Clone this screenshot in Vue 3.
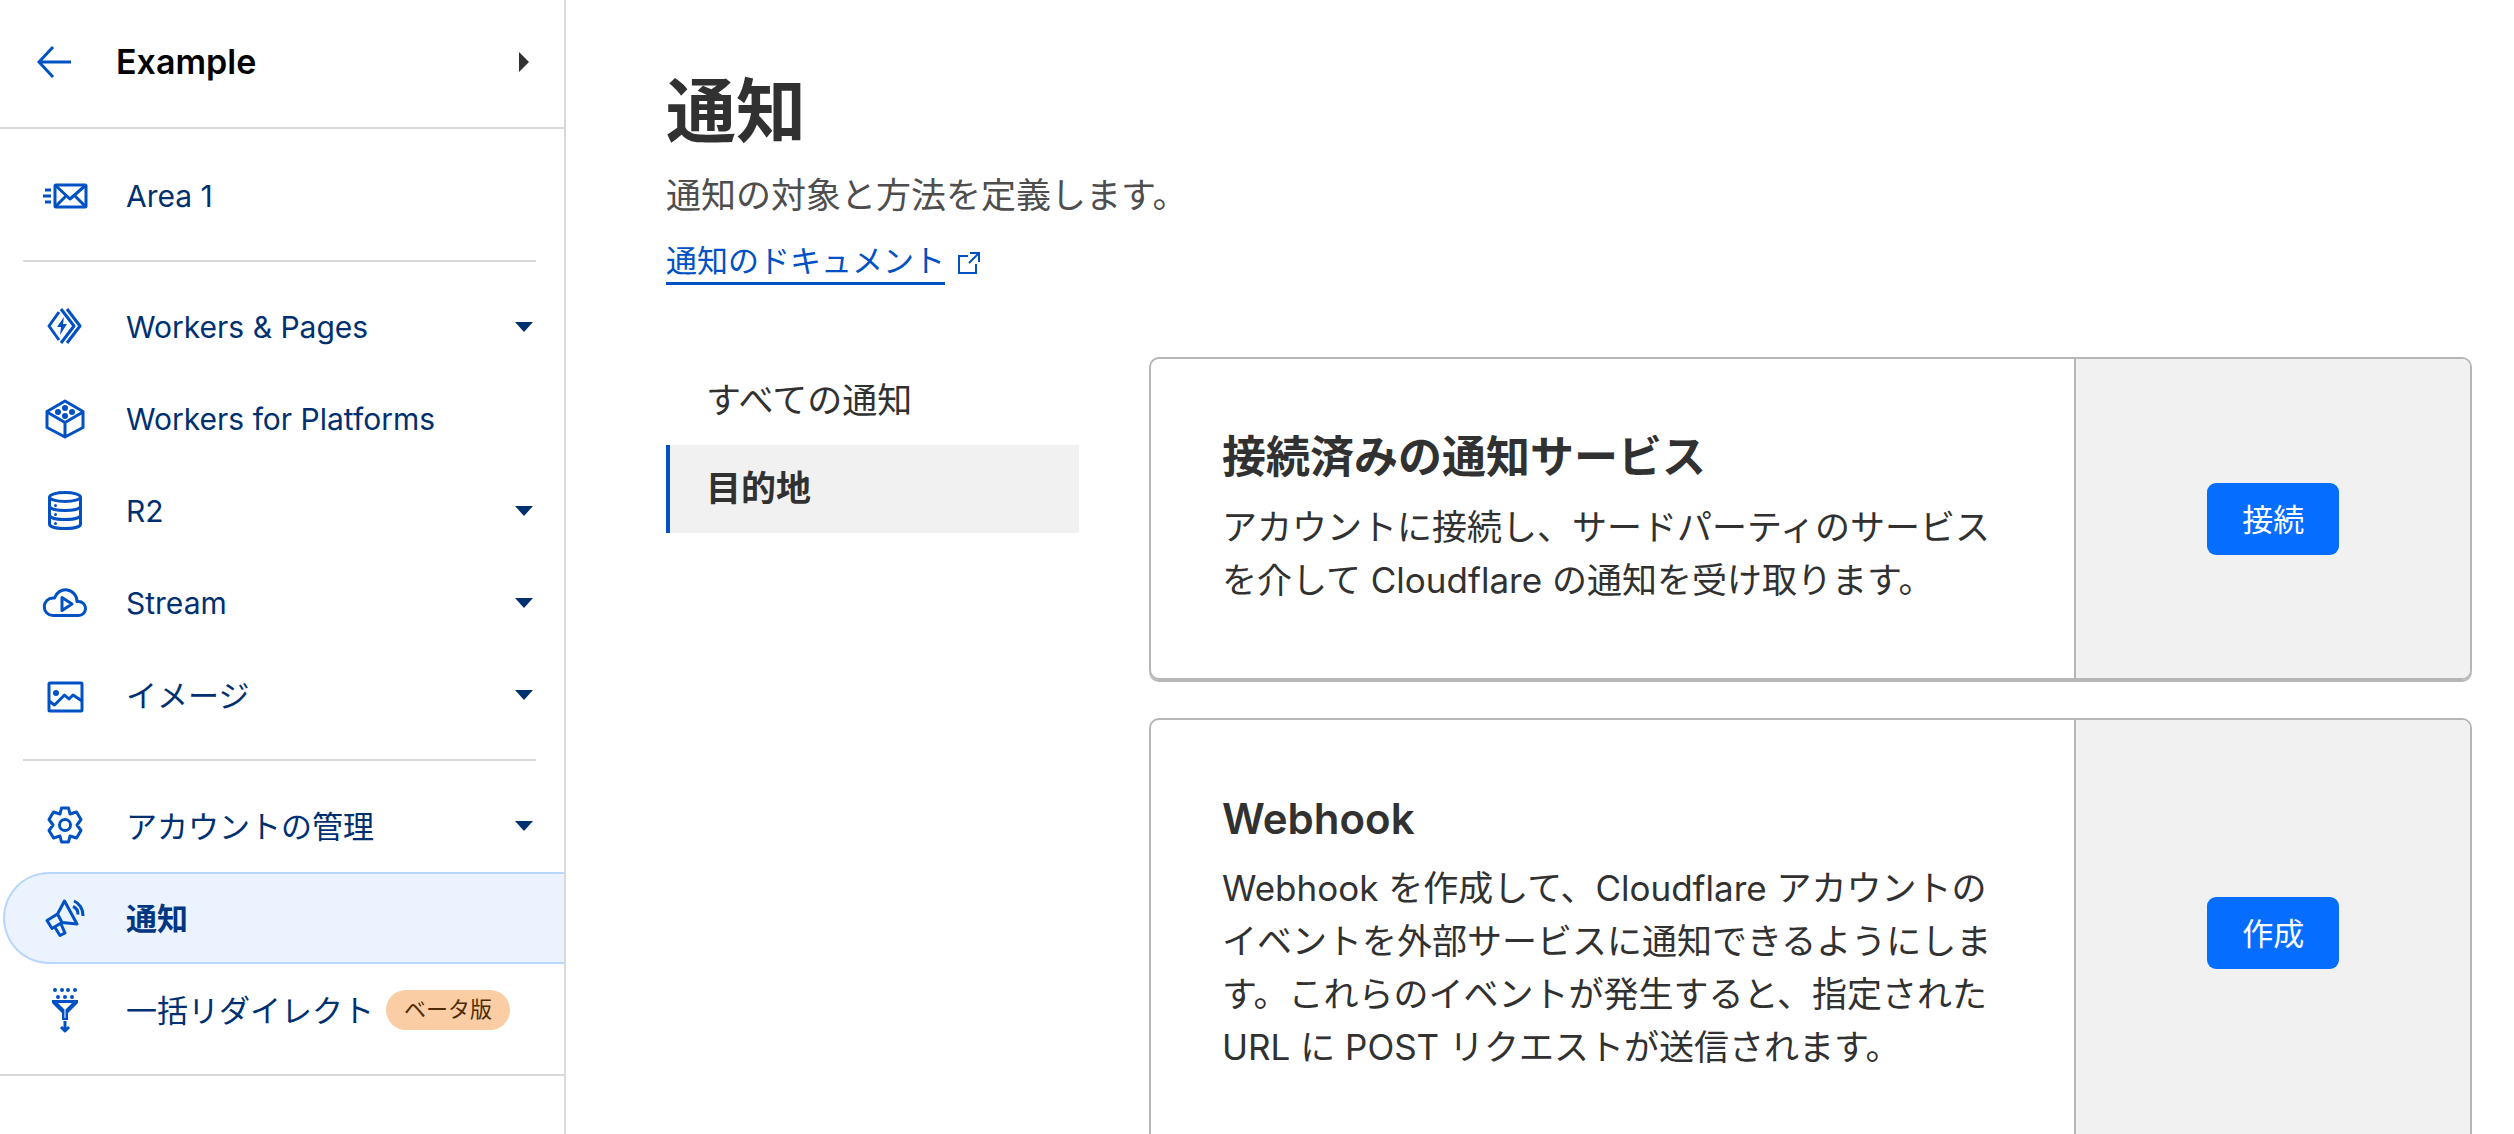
<script setup>
const navGroups = [
  [{ id: 'area', label: 'Area 1', lang: 'en' }],
  [
    { id: 'workers', label: 'Workers & Pages', lang: 'en', expandable: true },
    { id: 'platforms', label: 'Workers for Platforms', lang: 'en' },
    { id: 'r2', label: 'R2', lang: 'en', expandable: true },
    { id: 'stream', label: 'Stream', lang: 'en', expandable: true },
    { id: 'images', label: 'イメージ', expandable: true },
  ],
  [
    { id: 'account', label: 'アカウントの管理', expandable: true },
    { id: 'notifications', label: '通知', active: true },
    { id: 'redirects', label: '一括リダイレクト', badge: 'ベータ版' },
  ],
]

const tabs = [
  { label: 'すべての通知' },
  { label: '目的地', active: true },
]

const cards = [
  {
    title: '接続済みの通知サービス',
    text: 'アカウントに接続し、サードパーティのサービスを介して Cloudflare の通知を受け取ります。',
    action: '接続',
  },
  {
    title: 'Webhook',
    lang: 'en',
    text: 'Webhook を作成して、Cloudflare アカウントのイベントを外部サービスに通知できるようにします。これらのイベントが発生すると、指定された URL に POST リクエストが送信されます。',
    action: '作成',
  },
]
</script>

<template>
  <div class="app" lang="ja">
    <aside class="sidebar">
      <header class="account">
        <a class="back" href="#" aria-label="戻る">
          <svg width="34" height="32" viewBox="0 0 34 32" fill="none" stroke="currentColor" stroke-width="3">
            <path d="M34 16H2M16 1L2 16l14 15" />
          </svg>
        </a>
        <span class="account-name">Example</span>
        <button class="switch" type="button" aria-label="アカウントを切り替え">
          <svg width="10" height="20" viewBox="0 0 10 20"><path d="M0 0v20L10 10z" fill="currentColor" /></svg>
        </button>
      </header>

      <nav>
        <ul v-for="(group, g) in navGroups" :key="g" class="group">
          <li v-for="item in group" :key="item.id">
            <a href="#" class="item" :class="{ active: item.active }">
              <svg class="icon" viewBox="0 0 48 48">
                <g v-if="item.id === 'area'">
                  <rect x="14" y="13" width="31" height="22" rx="1" />
                  <path d="M14 13l15 14 16-14M14 35l11-11M45 35L34 24M4 18h6M2 24h8M4 30h6" />
                </g>
                <g v-else-if="item.id === 'workers'">
                  <path d="M18 9L8 23l10 14M20 6l13 17-13 17M26 6l13 17-13 17" />
                  <path class="solid" d="M23 14l-7 10h4l-1 8 7-11h-4z" />
                </g>
                <g v-else-if="item.id === 'platforms'">
                  <path d="M24 6l18 10.500v16L24 42 6 32.500v-16zM6 17l18 10.500L42 17M24 27.500V42" />
                  <circle class="solid" cx="24" cy="13" r="3" />
                  <circle class="solid" cx="17" cy="17" r="3" />
                  <circle class="solid" cx="31" cy="17" r="3" />
                  <circle class="solid" cx="24" cy="21" r="3" />
                </g>
                <g v-else-if="item.id === 'r2'">
                  <ellipse cx="24" cy="10" rx="15.500" ry="4.500" />
                  <path d="M8.500 10v27c0 6 31 6 31 0V10M8.500 19c0 6 31 6 31 0M8.500 28c0 6 31 6 31 0" />
                  <circle class="solid" cx="14.500" cy="18.500" r="1.500" />
                  <circle class="solid" cx="14.500" cy="27.500" r="1.500" />
                  <circle class="solid" cx="14.500" cy="36.500" r="1.500" />
                </g>
                <g v-else-if="item.id === 'stream'">
                  <path d="M12 36.500a8.700 8.700 0 0 1 0-17.500h1.500a11.500 11.500 0 0 1 22.500 3.500h1.500a7 7 0 0 1 0 14zM21 18.500v13L31 25z" />
                </g>
                <g v-else-if="item.id === 'images'">
                  <rect x="8" y="12" width="33" height="28" rx="1" />
                  <path d="M8 30l5.500 4L23.500 24l4.500 4 4-4 9 6" />
                  <circle class="solid" cx="15" cy="22" r="3" />
                </g>
                <g v-else-if="item.id === 'account'">
                  <path d="M20.500 6h7L29 12l6.500-2 4.500 7.500-4 5.500 4 5.500-4.500 7.500-6.500-2-1.500 6h-7L19 34l-6.500 2L8 28.500l4-5.500-4-5.500 4.500-7.500L19 12z" />
                  <circle cx="24" cy="23" r="5.500" />
                </g>
                <g v-else-if="item.id === 'notifications'">
                  <path d="M23.500 7L36 30l-15-1.500L11 34.500 6 26.500 16.500 20zM16.500 20l4.500 8.500M14 33.500l5 8 5-2.500-4-9" />
                  <path d="M32 12.500q5 2 5 8M33 7q9 4 9 15" />
                </g>
                <g v-else>
                  <path class="solid" d="M11 14h26v3L27 27v7h-6v-7L11 17z" />
                  <path class="hole" d="M17 17h14l-6.500 6.500V32h-1v-8.500z" />
                  <path d="M24 35v10M20 41l4 4 4-4" />
                  <circle v-for="x in [14, 21, 27, 34]" :key="x" class="solid" :cx="x" cy="4" r="2" />
                  <circle v-for="x in [17, 24, 31]" :key="x" class="solid" :cx="x" cy="11" r="2" />
                </g>
              </svg>
              <span class="label" :lang="item.lang">{{ item.label }}</span>
              <span v-if="item.badge" class="badge">{{ item.badge }}</span>
              <svg v-if="item.expandable" class="caret" width="18" height="10" viewBox="0 0 18 10">
                <path d="M0 0h18L9 10z" fill="currentColor" />
              </svg>
            </a>
          </li>
        </ul>
      </nav>
    </aside>

    <main class="main">
      <h1>通知</h1>
      <p class="lead">通知の対象と方法を定義します。</p>
      <a class="docs" href="#">
        <span>通知のドキュメント</span>
        <svg width="24" height="24" viewBox="0 0 24 24" fill="none" stroke="currentColor" stroke-width="2">
          <path d="M11 5H2v17h17v-9M13 2h9v9M22 2L12 12" />
        </svg>
      </a>

      <div class="columns">
        <nav class="tabs">
          <a v-for="tab in tabs" :key="tab.label" href="#" class="tab" :class="{ active: tab.active }">{{ tab.label }}</a>
        </nav>
        <div class="cards">
          <section v-for="card in cards" :key="card.title" class="card">
            <div class="card-body">
              <h2 :lang="card.lang">{{ card.title }}</h2>
              <p>{{ card.text }}</p>
            </div>
            <div class="card-side">
              <button class="primary" type="button">{{ card.action }}</button>
            </div>
          </section>
        </div>
      </div>
    </main>
  </div>
</template>

<style>
body {
  margin: 0;
  background: #fff;
}
</style>

<style scoped>
* {
  box-sizing: border-box;
}
.app {
  display: flex;
  height: 100vh;
  overflow: hidden;
  font-family: Inter, "Noto Sans CJK JP", sans-serif;
  color: #313131;
}
a {
  color: inherit;
  text-decoration: none;
}
h1, h2, p, ul {
  margin: 0;
  padding: 0;
}
ul {
  list-style: none;
}
button {
  border: 0;
  padding: 0;
  font-family: inherit;
}
svg {
  display: block;
  flex: none;
}

.sidebar {
  flex: none;
  width: 566px;
  border-right: 2px solid #d9d9d9;
}
.account {
  display: flex;
  align-items: center;
  height: 129px;
  padding: 0 35px 4px 37px;
  border-bottom: 2px solid #d9d9d9;
}
.back {
  color: #0051c3;
}
.account-name {
  flex: 1;
  margin-left: 45px;
  font-size: 34px;
  font-weight: 600;
  color: #000;
}
.switch {
  background: none;
  color: #313131;
}
.group {
  padding-top: 19px;
}
.group:first-child {
  padding-top: 21px;
}
.group:last-child {
  padding-bottom: 18px;
  border-bottom: 2px solid #d9d9d9;
}
.group:not(:last-child)::after {
  content: "";
  display: block;
  height: 2px;
  margin: 18px 28px 0 23px;
  background: #d9d9d9;
}
.item {
  display: flex;
  align-items: center;
  height: 92px;
  margin-left: 3px;
  padding: 0 31px 0 38px;
  font-size: 31px;
  color: #003070;
}
.item.active {
  padding-left: 36px;
  border: 2px solid #b9d6ff;
  border-right: 0;
  border-radius: 46px 0 0 46px;
  background: #ebf3ff;
  font-weight: 700;
  color: #003682;
}
.label {
  padding-bottom: 4px;
}
.label:lang(en) {
  padding-bottom: 0;
  font-size: 30px;
}
.icon {
  width: 48px;
  height: 48px;
  margin-right: 37px;
  fill: none;
  stroke: #0051c3;
  stroke-width: 3;
  stroke-linejoin: round;
}
.solid {
  fill: #0051c3;
  stroke: none;
}
.hole {
  fill: #fff;
  stroke: none;
}
.caret {
  margin-left: auto;
}
.badge {
  height: 40px;
  margin-left: 12px;
  padding: 0 18px;
  border-radius: 20px;
  background: #fbcda5;
  font-size: 22px;
  line-height: 38px;
  color: #4e2b05;
}

.main {
  flex: 1;
  min-width: 0;
  padding: 68px 42px 0 100px;
}
h1 {
  font-size: 70px;
  line-height: 88px;
  font-weight: 700;
}
.lead {
  margin-top: 12px;
  font-size: 35px;
  line-height: 54px;
  color: #4e4e4e;
}
.docs {
  display: inline-flex;
  align-items: center;
  gap: 12px;
  margin-top: 18px;
  font-size: 31px;
  line-height: 42px;
  color: #0051c3;
  vertical-align: top;
}
.docs span {
  border-bottom: 3px solid #0051c3;
}
.columns {
  display: flex;
  align-items: flex-start;
  gap: 70px;
  margin-top: 72px;
}
.tabs {
  flex: none;
  width: 413px;
}
.tab {
  display: block;
  padding: 0 36px 2px;
  border-left: 4px solid transparent;
  font-size: 35px;
  line-height: 86px;
}
.tab.active {
  border-color: #0051c3;
  background: #f1f1f1;
  font-weight: 700;
}
.cards {
  flex: 1;
  min-width: 0;
  display: flex;
  flex-direction: column;
  gap: 38px;
}
.card {
  display: flex;
  border: 2px solid #b6b6b6;
  border-radius: 10px;
  box-shadow: 0 2px 0 #b6b6b6;
}
.card-body {
  flex: 0 0 70%;
  padding: 71px;
}
.card-side {
  flex: 1;
  display: flex;
  align-items: center;
  justify-content: center;
  border-left: 2px solid #b6b6b6;
  border-radius: 0 8px 8px 0;
  background: #f1f1f1;
}
h2 {
  margin-bottom: 16px;
  font-size: 44px;
  line-height: 55px;
  font-weight: 600;
}
h2:lang(en) {
  font-size: 42px;
}
.card-body p {
  font-size: 35px;
  line-height: 53px;
}
.primary {
  height: 72px;
  padding: 0 35px 3px;
  border-radius: 9px;
  background: #056dff;
  font-size: 31px;
  color: #fff;
}
</style>
